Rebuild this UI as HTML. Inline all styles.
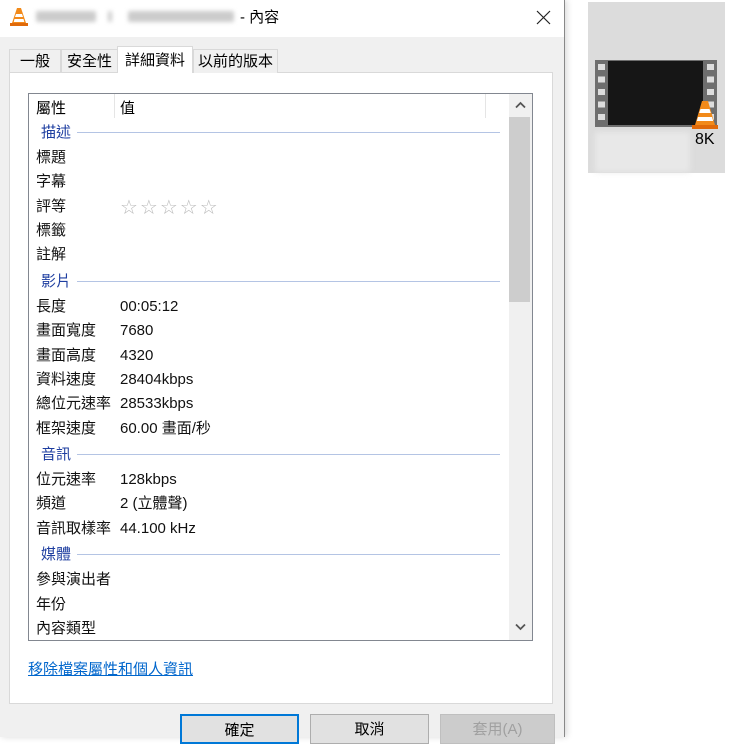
<!DOCTYPE html>
<html><head><meta charset="utf-8"><style>
*{margin:0;padding:0;box-sizing:border-box}
body{width:740px;height:737px;overflow:hidden;background:#fff;font-family:"Liberation Sans","Noto Sans CJK TC",sans-serif;font-size:15px;color:#000;position:relative}
.a{position:absolute;white-space:nowrap;line-height:20px}
.dlg{position:absolute;left:0;top:0;width:565px;height:737px;background:#f0f0f0;border-right:1px solid #888;box-shadow:2px 0 6px rgba(0,0,0,.15)}
.title{position:absolute;left:0;top:0;width:564px;height:37px;background:#fff}
.blur{position:absolute;background:#ccc;filter:blur(2px);border-radius:2px}
.tab{position:absolute;top:49px;height:24px;background:#f0f0f0;border:1px solid #d9d9d9;border-bottom:none;padding:2px 0 0;text-align:center;font-size:15px;line-height:20px;white-space:nowrap;overflow:visible}
.panel{position:absolute;left:9px;top:72px;width:544px;height:632px;background:#fff;border:1px solid #d9d9d9}
.list{position:absolute;left:28px;top:93px;width:505px;height:548px;border:1px solid #828790;background:#fff;overflow:hidden}
.sec{position:absolute;left:12px;color:#1e3ea0;font-size:15px;line-height:20px;white-space:nowrap;transform:translateY(2px)}
.line{position:absolute;height:1px;background:#b4c4e4}
.lbl{position:absolute;left:7px;line-height:20px;white-space:nowrap;color:#111;transform:translateY(2px)}
.val{position:absolute;left:91px;line-height:20px;white-space:nowrap;color:#111;transform:translateY(2px)}
.btn{position:absolute;top:714px;height:30px;border:1px solid #adadad;background:#e1e1e1;text-align:center;line-height:30px;font-size:15px}
</style></head><body>
<div class="dlg">
 <div class="title">
  <svg class="a" style="left:9px;top:7px" width="20" height="20" viewBox="0 0 20 20"><path d="M8 1h4l5 15H3z" fill="#f28a1a"/><path d="M7 7h6l1 3H6z M5.5 12h9l.8 3H4.7z" fill="#fff"/><rect x="1" y="16" width="18" height="3" fill="#e06a0a"/></svg>
  <div class="blur" style="left:36px;top:11px;width:60px;height:11px"></div>
  <div class="blur" style="left:108px;top:11px;width:4px;height:11px"></div>
  <div class="blur" style="left:128px;top:11px;width:106px;height:11px"></div>
  <div class="a" style="left:240px;top:8px;font-size:15px">- 內容</div>
  <svg class="a" style="left:536px;top:10px" width="15" height="15" viewBox="0 0 15 15"><path d="M1 1L14 14M14 1L1 14" stroke="#222" stroke-width="1.2"/></svg>
 </div>
 <div class="tab" style="left:9px;width:52px">一般</div>
 <div class="tab" style="left:61px;width:57px">安全性</div>
 <div class="panel"></div>
 <div class="tab" style="left:117px;top:46px;height:27px;width:76px;background:#fff;z-index:2;padding-top:4px">詳細資料</div>
 <div class="tab" style="left:193px;width:85px">以前的版本</div>
 <div class="list">
  <div class="a" style="left:7px;top:5px">屬性</div>
  <div class="a" style="left:91px;top:5px">值</div>
  <div class="a" style="left:85px;top:0;width:1px;height:24px;background:#e5e5e5"></div>
  <div class="a" style="left:456px;top:0;width:1px;height:24px;background:#e5e5e5"></div>
  <div class="sec" style="top:27px">描述</div><div class="line" style="left:48px;top:38px;width:423px"></div>
  <div class="lbl" style="top:52px">標題</div>
  <div class="lbl" style="top:76px">字幕</div>
  <div class="lbl" style="top:101px">評等</div>
  <div class="val" style="top:99px;color:#bbb;font-size:20px;letter-spacing:2px;font-family:'DejaVu Sans',sans-serif;line-height:24px">☆☆☆☆☆</div>
  <div class="lbl" style="top:125px">標籤</div>
  <div class="lbl" style="top:149px">註解</div>
  <div class="sec" style="top:176px">影片</div><div class="line" style="left:48px;top:187px;width:423px"></div>
  <div class="lbl" style="top:201px">長度</div><div class="val" style="top:201px">00:05:12</div>
  <div class="lbl" style="top:225px">畫面寬度</div><div class="val" style="top:225px">7680</div>
  <div class="lbl" style="top:250px">畫面高度</div><div class="val" style="top:250px">4320</div>
  <div class="lbl" style="top:274px">資料速度</div><div class="val" style="top:274px">28404kbps</div>
  <div class="lbl" style="top:298px">總位元速率</div><div class="val" style="top:298px">28533kbps</div>
  <div class="lbl" style="top:323px">框架速度</div><div class="val" style="top:323px">60.00 畫面/秒</div>
  <div class="sec" style="top:349px">音訊</div><div class="line" style="left:48px;top:360px;width:423px"></div>
  <div class="lbl" style="top:374px">位元速率</div><div class="val" style="top:374px">128kbps</div>
  <div class="lbl" style="top:398px">頻道</div><div class="val" style="top:398px">2 (立體聲)</div>
  <div class="lbl" style="top:423px">音訊取樣率</div><div class="val" style="top:423px">44.100 kHz</div>
  <div class="sec" style="top:449px">媒體</div><div class="line" style="left:48px;top:460px;width:423px"></div>
  <div class="lbl" style="top:474px">參與演出者</div>
  <div class="lbl" style="top:499px">年份</div>
  <div class="lbl" style="top:523px">內容類型</div>
  <div class="a" style="left:480px;top:0;width:23px;height:546px;background:#f0f0f0"></div>
  <div class="a" style="left:480px;top:23px;width:21px;height:185px;background:#cdcdcd"></div>
  <svg class="a" style="left:486px;top:7px" width="11" height="8" viewBox="0 0 11 8"><path d="M1 6.5L5.5 2 10 6.5" stroke="#555" stroke-width="1.8" fill="none"/></svg>
  <svg class="a" style="left:486px;top:529px" width="11" height="8" viewBox="0 0 11 8"><path d="M1 1.5L5.5 6 10 1.5" stroke="#555" stroke-width="1.8" fill="none"/></svg>
 </div>
 <div class="a" style="left:28px;top:660px;color:#0066cc;text-decoration:underline">移除檔案屬性和個人資訊</div>
 <div class="btn" style="left:180px;width:119px;border:2px solid #0078d7">確定</div>
 <div class="btn" style="left:310px;width:119px">取消</div>
 <div class="btn" style="left:440px;width:115px;color:#a0a0a0;background:#ccc;border-color:#bfbfbf">套用(A)</div>
</div>
<div class="a" style="left:588px;top:2px;width:137px;height:171px;background:#dcdcdc"></div>
<div class="a" style="left:595px;top:60px;width:122px;height:67px;background:#6e6e6e"></div>
<div class="a" style="left:608px;top:61px;width:95px;height:64px;background:#161616"></div>
<div class="a" style="left:598px;top:64px;width:7px;height:58px;background:repeating-linear-gradient(#ddd 0 6px,transparent 6px 12.5px)"></div>
<div class="a" style="left:707px;top:64px;width:7px;height:58px;background:repeating-linear-gradient(#ddd 0 6px,transparent 6px 12.5px)"></div>
<svg class="a" style="left:691px;top:100px" width="28" height="30" viewBox="0 0 28 30"><path d="M11 1h6l7 24H4z" fill="#f28a1a"/><path d="M9.5 9h9l1.3 4H8.2z M7 17h14l1.2 4H5.8z" fill="#fff"/><rect x="1" y="25" width="26" height="4" fill="#e06a0a"/></svg>
<div class="blur" style="left:595px;top:132px;width:95px;height:40px;background:#e8e8e8;filter:blur(3px)"></div>
<div class="a" style="left:695px;top:130px;font-size:16px">8K</div>
</body></html>
